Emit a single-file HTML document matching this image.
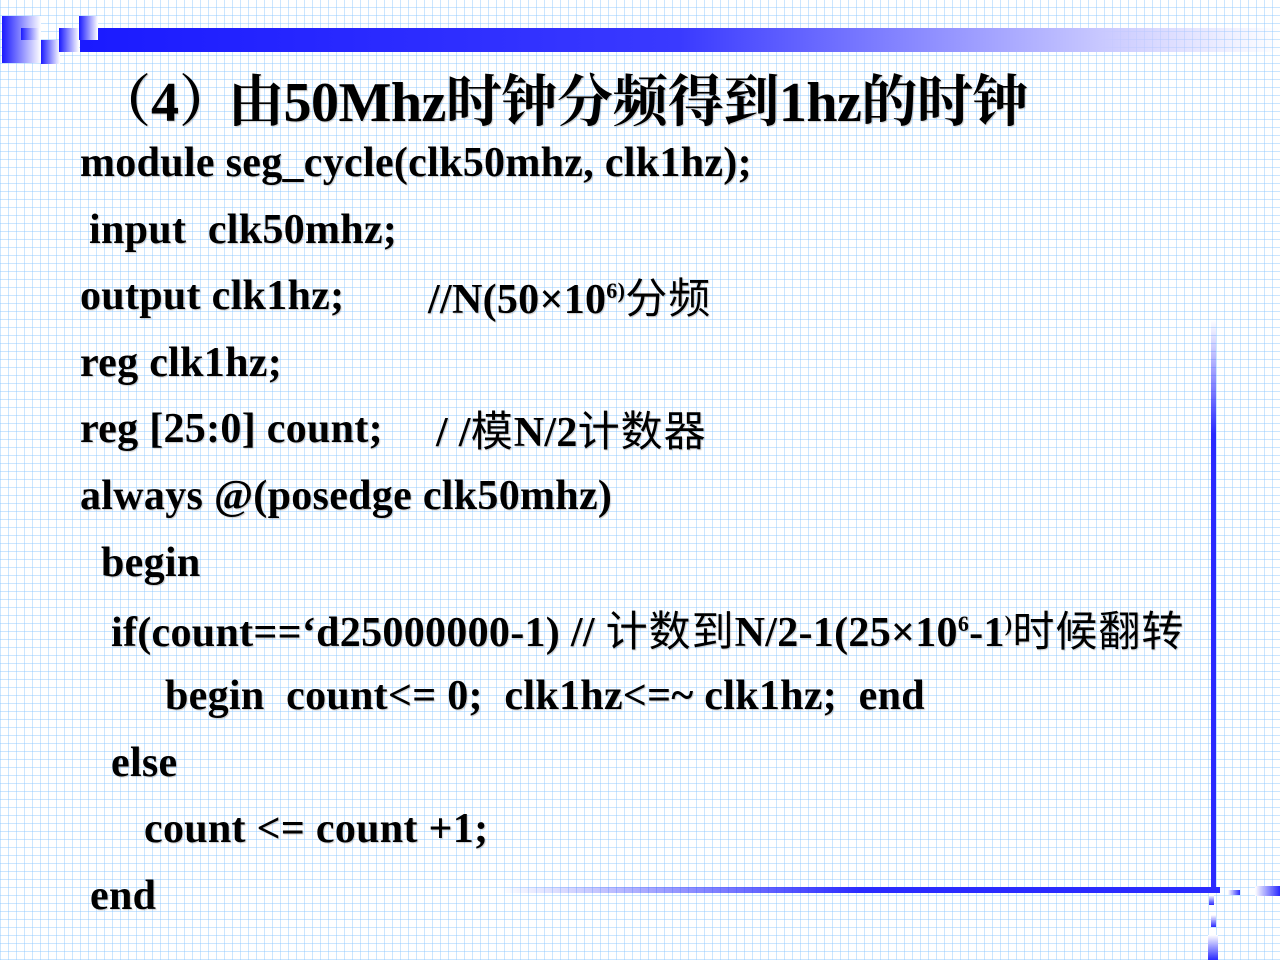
<!DOCTYPE html>
<html><head><meta charset="utf-8"><style>
html,body{margin:0;padding:0}
body{width:1280px;height:960px;position:relative;overflow:hidden;background-color:#fff;
background-image:repeating-linear-gradient(90deg,rgba(140,200,255,.45) 0 1px,transparent 1px 8px),repeating-linear-gradient(0deg,rgba(140,200,255,.45) 0 1px,transparent 1px 8px);}
.b{position:absolute}
.t{position:absolute;white-space:pre;font-family:"Liberation Serif","Noto Serif CJK SC",serif;font-weight:bold;font-size:42px;line-height:48px;color:#000;letter-spacing:0.3px;text-shadow:1px 1px 1px rgba(0,0,0,.2)}
.c{font-family:"Noto Sans CJK SC",sans-serif;font-weight:400;letter-spacing:1px}
sup{font-size:22px;vertical-align:15px;line-height:0}
</style></head><body>
<div class="b" style="left:80px;top:28px;width:1200px;height:24px;background:linear-gradient(90deg,#1a1aff 0%,#3a3aff 50%,#c8c8ff 85%,rgba(255,255,255,0) 100%)"></div>
<div class="b" style="left:2px;top:16px;width:39px;height:47px;background:linear-gradient(90deg,#1a1aff,#fff)"></div>
<div class="b" style="left:21px;top:28px;width:19px;height:12px;background:linear-gradient(90deg,#1a1aff,#fff)"></div>
<div class="b" style="left:41px;top:40px;width:19px;height:24px;background:linear-gradient(90deg,#1a1aff,#fff)"></div>
<div class="b" style="left:59px;top:28px;width:20px;height:24px;background:linear-gradient(90deg,#1a1aff,#fff)"></div>
<div class="b" style="left:79px;top:16px;width:19px;height:24px;background:linear-gradient(90deg,#1a1aff,#fff)"></div>
<div class="b" style="left:1211px;top:320px;width:5px;height:570px;background:linear-gradient(180deg,rgba(255,255,255,0),#2a2aff 20%,#2a2aff)"></div>
<div class="b" style="left:500px;top:887px;width:720px;height:6px;background:linear-gradient(90deg,rgba(255,255,255,0),#2a2aff 50%,#2a2aff)"></div>
<div class="b" style="left:1228px;top:890px;width:12px;height:5px;background:linear-gradient(90deg,#fff,#2a2aff)"></div>
<div class="b" style="left:1255px;top:886px;width:25px;height:10px;background:linear-gradient(90deg,#fff,#2a2aff)"></div>
<div class="b" style="left:1209px;top:895px;width:5px;height:10px;background:linear-gradient(180deg,#fff,#2a2aff)"></div>
<div class="b" style="left:1211px;top:915px;width:5px;height:12px;background:linear-gradient(180deg,#fff,#2a2aff)"></div>
<div class="b" style="left:1208px;top:935px;width:10px;height:25px;background:linear-gradient(180deg,#fff,#2a2aff)"></div>

<div class="t" style="top:72px;left:95px;font-size:56px;line-height:62px;letter-spacing:0">（4）</div>
<div class="t" style="top:72px;left:228px;font-size:56px;line-height:62px;letter-spacing:-0.5px">由50Mhz时钟分频得到1hz的时钟</div>
<div class="t" style="top:139px;left:80px">module seg_cycle(clk50mhz, clk1hz);</div>
<div class="t" style="top:206px;left:89px">input  clk50mhz;</div>
<div class="t" style="top:272px;left:80px">output clk1hz;</div>
<div class="t" style="top:272px;left:428px">//N(50×10<sup>6)</sup><span class="c">分频</span></div>
<div class="t" style="top:339px;left:80px">reg clk1hz;</div>
<div class="t" style="top:405px;left:80px">reg [25:0] count;</div>
<div class="t" style="top:405px;left:436px">/ /<span class="c">模</span>N/2<span class="c">计数器</span></div>
<div class="t" style="top:472px;left:80px">always @(posedge clk50mhz)</div>
<div class="t" style="top:539px;left:101px">begin</div>
<div class="t" style="top:605px;left:111px">if(count==‘d25000000-1) // <span class="c">计数到</span>N/2-1(25×10<sup>6</sup>-1<sup>)</sup><span class="c">时候翻转</span></div>
<div class="t" style="top:672px;left:165px">begin  count&lt;= 0;  clk1hz&lt;=~ clk1hz;  end</div>
<div class="t" style="top:739px;left:111px">else</div>
<div class="t" style="top:805px;left:144px">count &lt;= count +1;</div>
<div class="t" style="top:872px;left:90px">end</div>
</body></html>
